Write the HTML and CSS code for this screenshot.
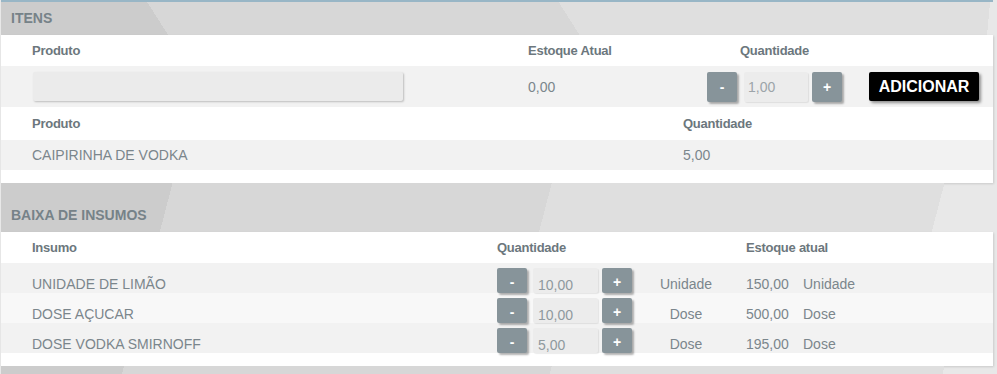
FILE: index.html
```html
<!DOCTYPE html>
<html lang="pt-BR">
<head>
  <meta charset="UTF-8" />
  <meta name="viewport" content="width=device-width, initial-scale=1.0" />
  <title>Ficha técnica</title>
  <link rel="stylesheet" href="styles.css">
</head>
<body>

  <section class="painel">
    <h2 class="painel-titulo titulo-itens">ITENS</h2>
    <div class="painel-corpo">
      <div class="linha cab grade-item">
        <span>Produto</span>
        <span>Estoque Atual</span>
        <span class="centro">Quantidade</span>
        <span></span>
      </div>
      <div class="linha entrada grade-item">
        <input type="text" class="campo-produto" />
        <span>0,00</span>
        <div class="qtd">
          <button class="btn-qtd">-</button>
          <input type="text" class="campo-qtd" value="1,00" />
          <button class="btn-qtd">+</button>
        </div>
        <button class="btn-adicionar">ADICIONAR</button>
      </div>
      <div class="linha cab cab-lista grade-lista">
        <span>Produto</span>
        <span>Quantidade</span>
      </div>
      <div class="linha item grade-lista">
        <span>CAIPIRINHA DE VODKA</span>
        <span>5,00</span>
      </div>
    </div>
  </section>

  <section class="painel">
    <h2 class="painel-titulo titulo-insumos">BAIXA DE INSUMOS</h2>
    <div class="painel-corpo">
      <div class="linha cab grade-insumo">
        <span>Insumo</span>
        <span>Quantidade</span>
        <span></span>
        <span class="dupla">Estoque atual</span>
      </div>
      <div class="linha insumo grade-insumo">
        <span>UNIDADE DE LIMÃO</span>
        <div class="qtd qtd-pequena">
          <button class="btn-qtd">-</button>
          <input type="text" class="campo-qtd" value="10,00" />
          <button class="btn-qtd">+</button>
        </div>
        <span class="unidade">Unidade</span>
        <span>150,00</span>
        <span>Unidade</span>
      </div>
      <div class="linha insumo grade-insumo">
        <span>DOSE AÇUCAR</span>
        <div class="qtd qtd-pequena">
          <button class="btn-qtd">-</button>
          <input type="text" class="campo-qtd" value="10,00" />
          <button class="btn-qtd">+</button>
        </div>
        <span class="unidade">Dose</span>
        <span>500,00</span>
        <span>Dose</span>
      </div>
      <div class="linha insumo grade-insumo">
        <span>DOSE VODKA SMIRNOFF</span>
        <div class="qtd qtd-pequena">
          <button class="btn-qtd">-</button>
          <input type="text" class="campo-qtd" value="5,00" />
          <button class="btn-qtd">+</button>
        </div>
        <span class="unidade">Dose</span>
        <span>195,00</span>
        <span>Dose</span>
      </div>
    </div>
  </section>

  <section class="painel">
    <div class="painel-titulo titulo-insumos titulo-proximo"></div>
  </section>

</body>
</html>
```

FILE: styles.css
```css
body {
  font-family: "Liberation Sans", Arial, sans-serif;
  background-color: #e8e8e8;
  margin: 0;
  padding: 0;
  overflow: hidden;
}

.painel {
  width: 992px;
  margin-left: 1px;
}

/* faixas de título com os cortes em diagonal */
.painel-titulo {
  margin: 0;
  padding-left: 10px;
  height: 33px;
  line-height: 33px;
  font-size: 14px;
  font-weight: bold;
  color: #768288;
}

.titulo-itens {
  border-top: 2px solid #98b6c6;
  background:
    linear-gradient(57.5deg, #cccccc 141px, transparent 141px),
    linear-gradient(57.5deg, #d7d7d7 488px, transparent 488px),
    linear-gradient(95.2deg, #dfdfdf 985px, transparent 985px);
}

.titulo-insumos {
  padding-top: 16px;
  background:
    linear-gradient(104.6deg, #cccccc 166px, transparent 166px),
    linear-gradient(104.6deg, #d7d7d7 533px, transparent 533px),
    linear-gradient(104.6deg, #dfdfdf 913px, transparent 913px);
}

.titulo-proximo {
  background:
    linear-gradient(104.6deg, #cccccc 119px, transparent 119px),
    linear-gradient(104.6deg, #d7d7d7 533px, transparent 533px),
    linear-gradient(104.6deg, #dfdfdf 913px, transparent 913px);
}

.painel-corpo {
  background-color: white;
  padding-bottom: 13px;
  box-shadow: 1px 1px 2px rgba(0,0,0,0.12);
}

.linha {
  display: grid;
  padding-left: 31px;
  font-size: 14px;
  color: #7b868c;
}

.cab {
  height: 31px;
  line-height: 31px;
  font-size: 13px;
  font-weight: bold;
  letter-spacing: -0.25px;
  color: #6c777d;
}

.cab-lista {
  height: 33px;
  line-height: 33px;
}

.centro {
  text-align: center;
}

.grade-item {
  grid-template-columns: 496px 179px 135px auto;
}

.grade-lista {
  grid-template-columns: 651px auto;
}

.grade-insumo {
  grid-template-columns: 465px 135px 114px 57px auto;
}

.dupla {
  grid-column: span 2;
}

.entrada {
  height: 41px;
  align-items: center;
  background-color: #f2f2f2;
}

.item {
  height: 30px;
  line-height: 30px;
  background-color: #f2f2f2;
}

.insumo {
  height: 30px;
  box-sizing: border-box;
  padding-top: 5px;
  align-items: start;
  line-height: 32px;
  background-color: #f2f2f2;
}

.insumo:nth-child(odd) {
  background-color: #f8f8f8;
}

.unidade {
  text-align: center;
  padding-right: 6px;
}

/* campos */
.campo-produto {
  box-sizing: border-box;
  width: 370px;
  height: 29px;
  margin-left: 1px;
  padding: 0;
  border: none;
  border-radius: 2px;
  background-color: #ebebeb;
  box-shadow: 1px 1px 2px rgba(0,0,0,0.22);
}

.qtd {
  display: flex;
  height: 30px;
}

.qtd .campo-qtd {
  width: 64px;
  margin: 0 4px 0 7px;
}

.campo-qtd {
  box-sizing: border-box;
  border: none;
  border-radius: 2px;
  padding: 0 4px;
  background-color: #ececec;
  box-shadow: 1px 1px 1px rgba(0,0,0,0.08);
  font-family: "Liberation Sans", Arial, sans-serif;
  font-size: 14px;
  color: #9ca4a9;
}

.btn-qtd {
  width: 30px;
  padding: 0;
  border: none;
  border-radius: 2px;
  background-color: #87949a;
  box-shadow: 2px 2px 2px rgba(0,0,0,0.3);
  color: white;
  font-family: "Liberation Sans", Arial, sans-serif;
  font-size: 14px;
  font-weight: bold;
  cursor: pointer;
}

.qtd-pequena {
  height: 25px;
  line-height: normal;
}

.qtd-pequena .btn-qtd {
  padding-top: 2px;
}

.qtd-pequena .campo-qtd {
  width: 65px;
  margin: 0 4px 0 6px;
  padding: 8px 5px 0;
  color: #8f999e;
}

.btn-adicionar {
  justify-self: start;
  margin-left: 27px;
  width: 110px;
  height: 29px;
  padding: 0;
  border: none;
  border-radius: 2px;
  background-color: #000;
  box-shadow: 2px 2px 3px rgba(0,0,0,0.4);
  color: white;
  font-family: "Liberation Sans", Arial, sans-serif;
  font-size: 16px;
  font-weight: bold;
  cursor: pointer;
}
```
